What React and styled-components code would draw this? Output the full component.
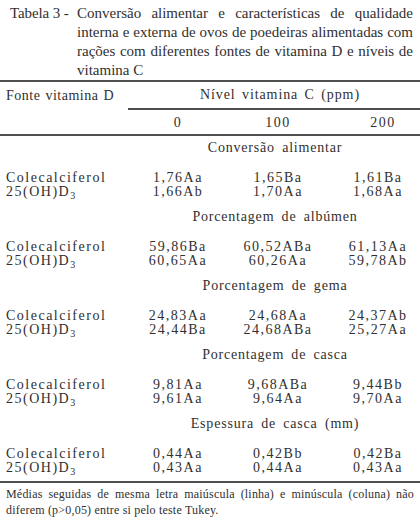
import React from 'react';
import styled, { createGlobalStyle } from 'styled-components';

const GlobalStyle = createGlobalStyle`
  html, body {
    margin: 0;
    padding: 0;
    background: #ffffff;
  }
  body {
    font-family: "Liberation Serif", "Times New Roman", serif;
    color: #303030;
  }
`;

const Page = styled.div`
  width: 420px;
  padding-top: 4px;
`;

const Caption = styled.div`
  display: flex;
  padding: 0 7px 0 10px;
  font-size: 15px;
  line-height: 19px;
`;

const CaptionLabel = styled.div`
  flex: none;
  width: 67px;
  white-space: nowrap;
  letter-spacing: -0.1px;
`;

const CaptionText = styled.div`
  flex: 1;
  min-width: 0;
`;

const CaptionLine = styled.span`
  display: block;
  white-space: nowrap;
  text-align: ${({ $last }) => ($last ? 'left' : 'justify')};
  text-align-last: ${({ $last }) => ($last ? 'left' : 'justify')};
`;

const Table = styled.div`
  border-top: 2px solid #4f4f4f;
  border-bottom: 2px solid #4f4f4f;
  padding-bottom: 6px;
  font-size: 14px;
  letter-spacing: 1.5px;
`;

const Row = styled.div`
  display: grid;
  grid-template-columns: 122px 100px 100px 1fr;
  align-items: center;
  padding-left: 6px;
  box-sizing: border-box;
  height: ${({ $h }) => $h}px;
  border-bottom: ${({ $rule }) => ($rule ? '2px solid #4f4f4f' : 'none')};
  line-height: ${({ $h }) => $h}px;
`;

const HeadSpan = styled.div`
  grid-column: 2 / 5;
  align-self: stretch;
  box-sizing: border-box;
  border-bottom: 2px solid #4f4f4f;
  line-height: 26px;
  text-align: center;
  padding-left: 12px;
  letter-spacing: 0.9px;
  word-spacing: 2px;
`;

const HeadLabel = styled.div`
  white-space: nowrap;
  letter-spacing: 0.5px;
  word-spacing: 1px;
`;

const Label = styled.div`
  white-space: nowrap;
`;

const Value = styled.div`
  text-align: center;
  white-space: nowrap;
  padding-left: ${({ $pad }) => $pad || 0}px;
`;

const Section = styled.div`
  margin-top: ${({ $first }) => ($first ? '0' : '6px')};
`;

const SectionTitle = styled.div`
  grid-column: 2 / 5;
  text-align: center;
  padding-left: 2px;
  letter-spacing: 0.8px;
  word-spacing: 3px;
  white-space: nowrap;
`;

const DataRow = styled.div`
  display: grid;
  grid-template-columns: 122px 100px 100px 1fr;
  padding-left: 6px;
  padding-top: ${({ $top }) => $top}px;
  line-height: ${({ $lh }) => $lh}px;
`;

const Sub = styled.sub`
  font-size: 10px;
  line-height: 0;
  vertical-align: -3px;
  letter-spacing: 0;
`;

const Note = styled.div`
  padding: 3px 6px 0 6px;
  font-size: 12px;
  line-height: 16px;
  letter-spacing: 0.2px;
`;

const NoteLine = styled.span`
  display: block;
  white-space: nowrap;
  text-align: ${({ $last }) => ($last ? 'left' : 'justify')};
  text-align-last: ${({ $last }) => ($last ? 'left' : 'justify')};
`;

const sections = [
  { title: 'Conversão alimentar', a: ['1,76Aa', '1,65Ba', '1,61Ba'], b: ['1,66Ab', '1,70Aa', '1,68Aa'] },
  { title: 'Porcentagem de albúmen', a: ['59,86Ba', '60,52ABa', '61,13Aa'], b: ['60,65Aa', '60,26Aa', '59,78Ab'] },
  { title: 'Porcentagem de gema', a: ['24,83Aa', '24,68Aa', '24,37Ab'], b: ['24,44Ba', '24,68ABa', '25,27Aa'] },
  { title: 'Porcentagem de casca', a: ['9,81Aa', '9,68ABa', '9,44Bb'], b: ['9,61Aa', '9,64Aa', '9,70Aa'] },
  { title: 'Espessura de casca (mm)', a: ['0,44Aa', '0,42Bb', '0,42Ba'], b: ['0,43Aa', '0,44Aa', '0,43Aa'] },
];

function Values({ list }) {
  return list.map((v, i) => (
    <Value key={i} $pad={i === 2 ? 8 : 0}>{v}</Value>
  ));
}

export default function App() {
  return (
    <Page>
      <GlobalStyle />
      <Caption>
        <CaptionLabel>Tabela 3 -</CaptionLabel>
        <CaptionText>
          <CaptionLine>Conversão alimentar e características de qualidade</CaptionLine>
          <CaptionLine>interna e externa de ovos de poedeiras alimentadas com</CaptionLine>
          <CaptionLine>rações com diferentes fontes de vitamina D e níveis de</CaptionLine>
          <CaptionLine $last>vitamina C</CaptionLine>
        </CaptionText>
      </Caption>

      <Table>
        <Row $h={28}>
          <HeadLabel>Fonte vitamina D</HeadLabel>
          <HeadSpan>Nível vitamina C (ppm)</HeadSpan>
        </Row>
        <Row $h={26} $rule>
          <Label />
          <Value>0</Value>
          <Value>100</Value>
          <Value $pad={18}>200</Value>
        </Row>

        {sections.map((s, i) => (
          <Section key={s.title} $first={i === 0}>
            <Row $h={24}>
              <SectionTitle>{s.title}</SectionTitle>
            </Row>
            <DataRow $top={10} $lh={15}>
              <Label>Colecalciferol</Label>
              <Values list={s.a} />
            </DataRow>
            <DataRow $top={0} $lh={14}>
              <Label>25(OH)D<Sub>3</Sub></Label>
              <Values list={s.b} />
            </DataRow>
          </Section>
        ))}
      </Table>

      <Note>
        <NoteLine>Médias seguidas de mesma letra maiúscula (linha) e minúscula (coluna) não</NoteLine>
        <NoteLine $last>diferem (p&gt;0,05) entre si pelo teste Tukey.</NoteLine>
      </Note>
    </Page>
  );
}
